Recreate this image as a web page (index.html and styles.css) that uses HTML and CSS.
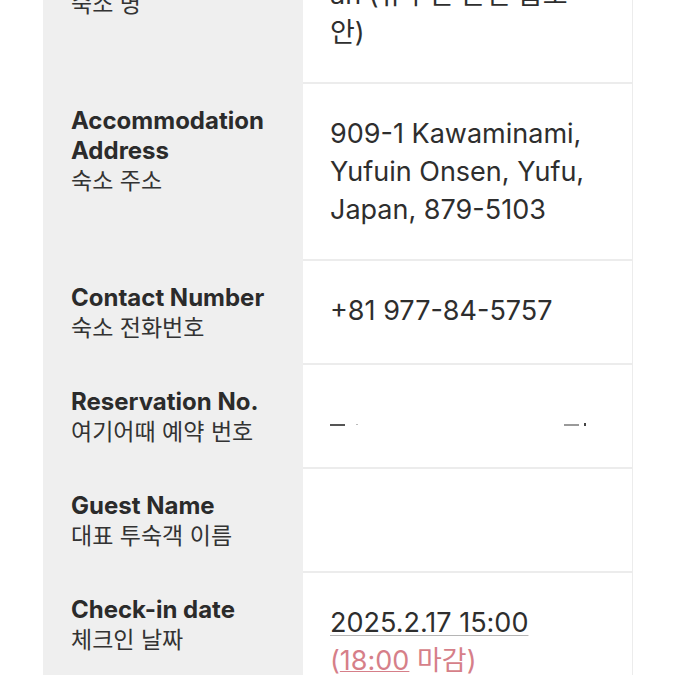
FILE: index.html
```html
<!DOCTYPE html>
<html lang="ko">
<head>
    <meta charset="UTF-8">
    <meta name="viewport" content="width=device-width, initial-scale=1.0">
    <title>Reservation Details</title>
    <link rel="stylesheet" href="styles.css">
</head>
<body>
    <main class="sheet">
        <!-- Accommodation name -->
        <div class="label">
            <strong>Accommodation Name</strong>
            <span>숙소 명</span>
        </div>
        <div class="value">Yufuin Onsen Ryokan<br>an (유후인 온천 숍호<br>안)</div>

        <!-- Address -->
        <div class="label">
            <strong>Accommodation Address</strong>
            <span>숙소 주소</span>
        </div>
        <div class="value">909-1 Kawaminami,<br>Yufuin Onsen, Yufu,<br>Japan, 879-5103</div>

        <!-- Phone -->
        <div class="label">
            <strong>Contact Number</strong>
            <span>숙소 전화번호</span>
        </div>
        <div class="value">+81 977-84-5757</div>

        <!-- Reservation number (hidden) -->
        <div class="label">
            <strong>Reservation No.</strong>
            <span>여기어때 예약 번호</span>
        </div>
        <div class="value">
            <div class="redacted">
                <i class="bar dark"></i>
                <i class="dot"></i>
                <i class="gap"></i>
                <i class="bar light"></i>
                <i class="tick"></i>
            </div>
        </div>

        <!-- Guest -->
        <div class="label">
            <strong>Guest Name</strong>
            <span>대표 투숙객 이름</span>
        </div>
        <div class="value"></div>

        <!-- Check-in -->
        <div class="label">
            <strong>Check-in date</strong>
            <span>체크인 날짜</span>
        </div>
        <div class="value">
            <span class="date">2025.2.17 15:00</span><br>
            <span class="deadline">(<u>18:00</u> 마감)</span>
        </div>
    </main>
</body>
</html>
```

FILE: styles.css
```css
/* General */
body {
    margin: 0;
    background: #ffffff;
    font-family: Inter, "Noto Sans CJK KR", sans-serif;
    color: #2b2b2b;
}

/* Two column info table */
.sheet {
    display: grid;
    grid-template-columns: 260px 330px;
    margin: -93px 0 0 43px;
    width: 590px;
}

.label {
    background: #efefef;
    padding: 22px 20px 22px 28px;
    line-height: 30px;
}

.label strong {
    display: block;
    font-size: 24px;
    font-weight: 700;
    color: #2b2b2b;
}

.label span {
    display: block;
    font-size: 23px;
    color: #333333;
}

.value {
    background: #ffffff;
    padding: 31px 10px 30px 27px;
    border-bottom: 2px solid #ececec;
    border-right: 1px solid #ececec;
    font-size: 27px;
    line-height: 38px;
    color: #2e2e2e;
    white-space: nowrap;
}

/* Check-in */
.date {
    text-decoration: underline;
    text-decoration-color: #b5b5b5;
    text-decoration-thickness: 1px;
    text-underline-offset: 3px;
}

.deadline {
    color: #d67f89;
}

.deadline u {
    text-decoration-thickness: 1px;
    text-underline-offset: 1px;
}

/* Masked reservation number */
.redacted {
    display: flex;
    align-items: flex-start;
    height: 38px;
    padding-top: 28px;
    box-sizing: border-box;
}

.redacted i {
    display: block;
}

.bar {
    height: 2px;
    width: 15px;
}

.bar.dark {
    background: #555;
}

.bar.light {
    background: #9a9a9a;
}

.dot {
    width: 2px;
    height: 1px;
    margin-left: 11px;
    background: #bbb;
}

.gap {
    width: 206px;
}

.tick {
    width: 2px;
    height: 3px;
    margin: -1px 0 0 5px;
    background: #444;
}
```
